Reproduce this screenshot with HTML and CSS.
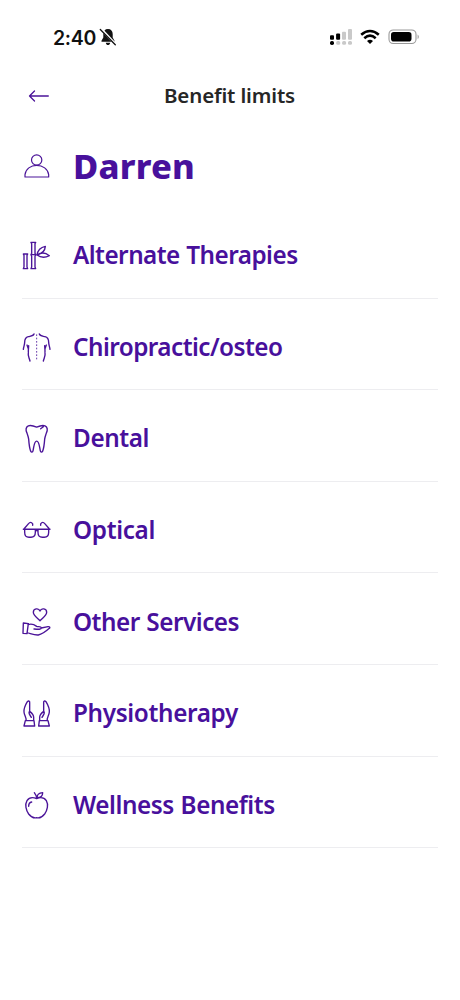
FILE: index.html
```html
<!DOCTYPE html>
<html lang="en">
<head>
<meta charset="utf-8">
<title>Benefit limits</title>
<link rel="stylesheet" href="styles.css">
</head>
<body>
<div class="status">
  <span class="time">2:40</span>
  <svg class="bell" viewBox="0 0 18 18"><path d="M9 1C6 1 4.300 3 4.300 6v3.500L2.500 12.700v1h13v-1L13.700 9.500V6C13.700 3 12 1 9 1zM6.800 14.700h4.400C11 16.200 10 17 9 17s-2-.8-2.200-2.300z" fill="#111"/><path d="M2.500 1.300l14 15" stroke="#fff" stroke-width="2.600"/><path d="M1.300 1.500l15 15.300" stroke="#111" stroke-width="1.300" stroke-linecap="round"/></svg>
  <svg class="signal" viewBox="0 0 24 18"><g fill="#c9c9c9"><rect x="13" y="3.700" width="4" height="8" rx="1"/><rect x="19" y="1" width="4" height="10.700" rx="1"/><rect x="7.200" y="13" width="4" height="3.700" rx="1.500"/><rect x="13.100" y="13" width="4" height="3.700" rx="1.500"/><rect x="19" y="13" width="4" height="3.700" rx="1.500"/></g><g fill="#000"><rect x="1" y="7.200" width="4" height="4.500" rx="1"/><rect x="7.100" y="5.500" width="4" height="6.200" rx="1"/><rect x="1" y="13" width="4" height="4" rx="1.700"/></g></svg>
  <svg class="wifi" viewBox="0 0 20 16"><g fill="none" stroke="#000" stroke-width="2.600"><path d="M1.200 5.800Q10-1.800 18.800 5.800"/><path d="M4.300 9.200Q10 4.200 15.700 9.200"/></g><path d="M7 12Q10 9.600 13 12L10 15z"/></svg>
  <svg class="battery" viewBox="0 0 32 16"><rect x="1" y="1" width="27" height="13.500" rx="4.300" fill="#fff" stroke="#999" stroke-width="1.100"/><rect x="3" y="3" width="20.500" height="9.500" rx="2.800"/><path d="M29.600 5.400v4.600c1.600-.7 1.600-3.900 0-4.600z" fill="#999"/></svg>
</div>
<header class="nav">
  <svg class="back" viewBox="0 0 22 14"><path d="M20.300 7H1.500M6.500 2L1.500 7l5 5"/></svg>
  <h1 class="title">Benefit limits</h1>
</header>
<main class="content">
  <div class="person">
    <svg class="icon thin" viewBox="36 225 90 90"><circle cx="80" cy="252" r="15.500"/><path d="M45 303v-7c2-17 17-28 35-28s34 11 36 28v7z"/></svg>
    <h2 class="name">Darren</h2>
  </div>
  <ul class="list">
    <li class="row">
      <svg class="icon" viewBox="21 15 90 90"><path d="M25 57h13l-2 4v35l2 5H25l2-5V61zM48 22h14l-2 4v29l2 4H48l2-4V26zM48 59h14l-2 5v32l2 5H48l2-5V64zM66 60C68 47 76 37 91 34c-1 14-9 22-25 26zM66 60c13-9 25-8 37 2-13 7-25 7-37-2z"/></svg>
      <span class="label w1">Alternate Therapies</span>
    </li>
    <li class="row">
      <svg class="icon" viewBox="21 20 90 90"><path d="M57 26c-2 6-9 6-17 8-8 2-11 8-11 17 0 7-3 13-4 21M36 59c4 8 6 14 4 23-2 8 2 14 5 25M41 61l-1 14M73 26c2 6 9 6 17 8 8 2 11 8 11 17 0 7 3 13 4 21M94 59c-4 8-6 14-4 23 2 8-2 14-5 25M89 61l1 14"/><path class="dash" d="M65 27v78"/></svg>
      <span class="label w2">Chiropractic/osteo</span>
    </li>
    <li class="row">
      <svg class="icon" viewBox="21 18.600 90 90"><path d="M65 31c-9-4-17-7-25-4-8 4-8 13-4 22 2 6 4 10 5 18 1 14 2 26 6 36 2 4 6 4 7-1 3-12 3-29 11-29s8 17 11 29c1 5 5 5 7 1 4-10 5-22 6-36 1-8 3-12 5-18 4-9 4-18-4-22-8-3-16 0-25 4M77 36l8-6"/></svg>
      <span class="label w3">Dental</span>
    </li>
    <li class="row">
      <svg class="icon" viewBox="21 16.400 90 90"><path d="M25 59h80M29 59v9c0 12 4 15 13 15h6c9 0 13-4 13-15v-9M69 59v9c0 12 4 15 13 15h6c9 0 13-4 13-15v-9M61 65c2-3 6-3 8 0M28 57l12-14c5-6 9-6 13 0v4M102 57L90 43c-5-6-9-6-13 0v4"/></svg>
      <span class="label w4">Optical</span>
    </li>
    <li class="row">
      <svg class="icon" viewBox="21 19 90 90"><path d="M75 60C66 51 55 45 55 35c0-12 16-14 20-4 4-10 20-8 20 4 0 10-11 16-20 25zM25 67l15 2-4 30-12-1zM39 72c11-4 18-1 26 5 5 2 13-1 14 4 0 6-10 5-22 4M79 82l20-4c5-1 7 3 4 5-10 9-22 18-33 20-12 1-22-4-34-7"/></svg>
      <span class="label w5">Other Services</span>
    </li>
    <li class="row">
      <svg class="icon" viewBox="21 18 90 90"><path d="M33 86c2-10-5-15-6-26-1-13 4-21 10-31 4-4 8-2 7 3v26c8 6 12 11 12 18v10M44 58c-6 6 2 12 5 18M31 86h26l2 16H27zM97 86c-2-10 5-15 6-26 1-13-4-21-10-31-4-4-8-2-7 3v26c-8 6-12 11-12 18v10M86 58c6 6-2 12-5 18M99 86H73l-2 16h32z"/></svg>
      <span class="label w6">Physiotherapy</span>
    </li>
    <li class="row">
      <svg class="icon" viewBox="21 17 90 90"><path d="M65 43c-12-5-23-3-29 6-7 12-3 29 5 40 7 9 13 14 24 11 11 3 17-2 24-11 8-11 12-28 5-40-6-9-17-11-29-6zM65 43c0-7-3-13-7-18M66 40c0-9 6-14 17-15 0 10-6 15-17 15zM41 66c0-7 3-12 9-13"/></svg>
      <span class="label w7">Wellness Benefits</span>
    </li>
  </ul>
</main>
</body>
</html>
```
FILE: styles.css
```css
* { box-sizing: border-box; }
body { margin: 0; width: 460px; height: 1000px; background: #fff; font-family: "Noto Sans", "Open Sans", sans-serif; overflow: hidden; }
svg { display: block; flex: none; }
.status { height: 74px; display: flex; align-items: center; padding-left: 53px; }
.time { font: 600 19.500px/24px Inter, sans-serif; letter-spacing: -0.300px; width: 46px; padding-top: 1px; color: #111; white-space: nowrap; }
.bell { width: 18px; height: 18px; }
.signal { width: 24px; height: 18px; margin-left: 212px; }
.wifi { width: 20px; height: 16px; margin-left: 7px; }
.battery { width: 32px; height: 16px; margin-left: 8px; }
.nav { height: 44px; display: flex; align-items: center; padding-left: 28px; }
.back { width: 22px; height: 14px; fill: none; stroke: #4b1499; stroke-width: 1.300; stroke-linecap: round; stroke-linejoin: round; }
.title { margin: -3px 0 0 114px; font-size: 20.500px; font-weight: 600; line-height: 28px; letter-spacing: -0.150px; color: #262626; white-space: nowrap; }
.content { padding: 0 22px; }
.person { height: 89px; display: flex; align-items: center; padding-top: 7px; }
.name { margin: 0 0 0 21px; font-size: 34.500px; font-weight: 800; line-height: 44px; letter-spacing: 0.200px; color: #48109c; }
.icon { width: 30px; height: 30px; fill: none; stroke: #4b1499; stroke-width: 4.100; stroke-linejoin: round; stroke-linecap: round; }
.thin { stroke-width: 3.600; }
.dash { stroke-width: 2.500; stroke-dasharray: 5 5; stroke-linecap: butt; }
.list { list-style: none; margin: 0; padding: 0; }
.row { height: 91.600px; display: flex; align-items: center; padding-top: 6px; border-bottom: 1.500px solid #ededf0; }
.label { margin-left: 21px; font-size: 24.300px; font-weight: 600; line-height: 34px; color: #48109c; white-space: nowrap; word-spacing: 0.800px; }
.w1 { letter-spacing: -0.540px; }
.w2 { letter-spacing: -0.550px; }
.w3 { letter-spacing: -0.400px; }
.w4 { letter-spacing: -0.330px; }
.w5 { letter-spacing: -0.500px; }
.w6 { letter-spacing: -0.350px; }
.w7 { letter-spacing: -0.430px; }
```
